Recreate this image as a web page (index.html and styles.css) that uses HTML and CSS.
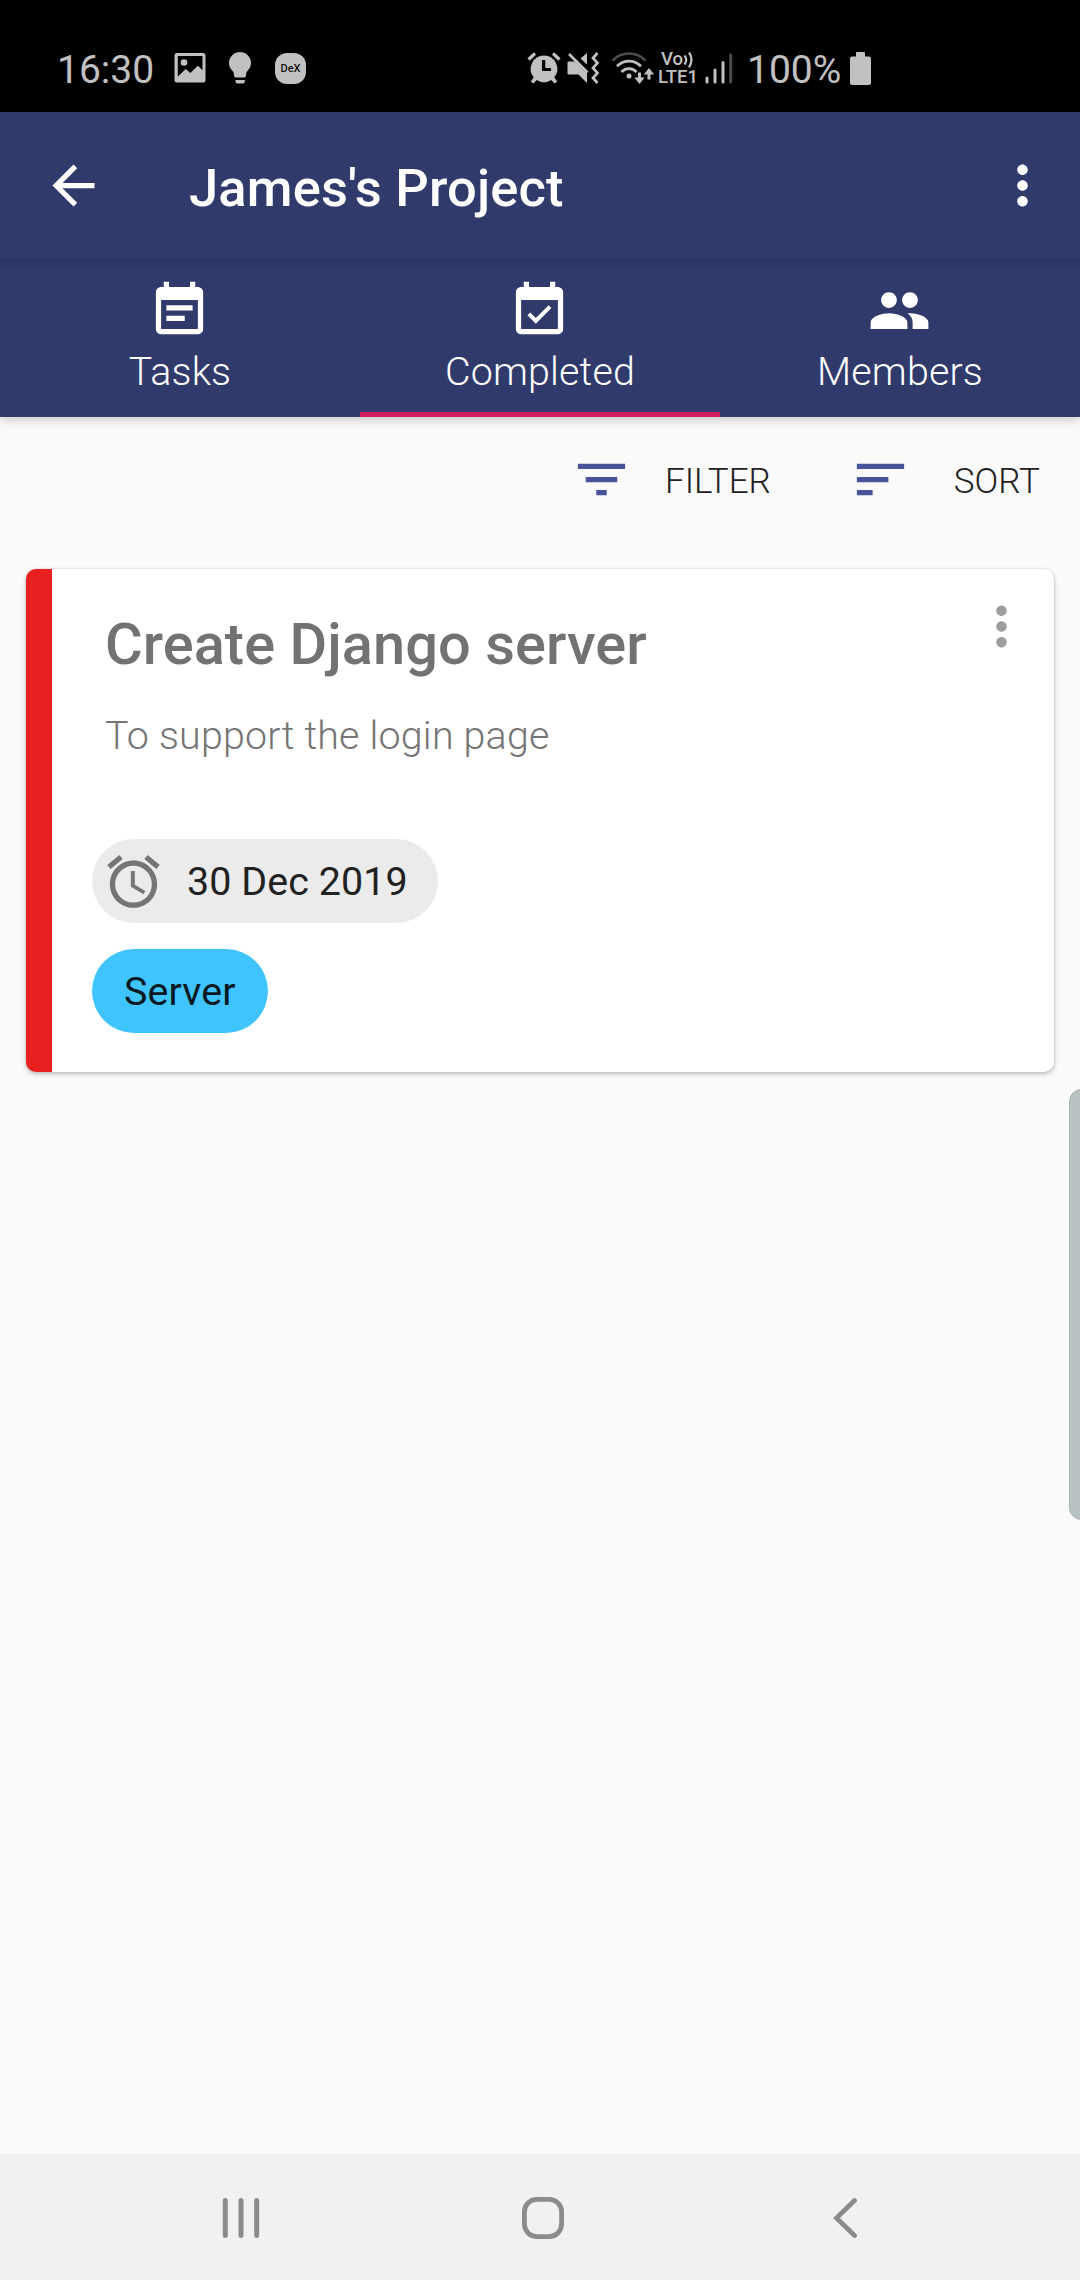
FILE: index.html
```html
<!DOCTYPE html>
<html lang="en">
<head>
<meta charset="utf-8">
<title>James's Project</title>
<link rel="stylesheet" href="styles.css">
</head>
<body>
<div class="screen">
  <div class="status-bar">
    <span class="status-text clock">16:30</span>
    <svg class="status-icon" width="32" height="32" viewBox="0 0 32 32"><path fill-rule="evenodd" d="M3 1h26a2.500 2.500 0 0 1 2.500 2.500v24.500a2.500 2.500 0 0 1-2.500 2.500H3A2.500 2.500 0 0 1 .500 28V3.500A2.500 2.500 0 0 1 3 1zm.800 3v20.500l8-7.500 4.500 4 7.700-7.200 4.500 4.400V4z"/><circle cx="10" cy="10.500" r="3.300"/></svg>
    <svg class="status-icon bulb" width="24" height="32" viewBox="0 0 24 32"><path d="M12 0a11 11 0 0 1 11 11c0 4.500-2.500 6.700-4.500 9l-.7 4.500q-.3.900-1.300.900h-9q-1 0-1.300-.9L5.500 20C3.500 17.700 1 15.500 1 11A11 11 0 0 1 12 0zM7.500 28h9.300v1.500q0 2-2 2H9.500q-2 0-2-2z"/></svg>
    <span class="dex">DeX</span>
    <div class="status-right">
      <svg class="status-icon" width="34" height="34" viewBox="0 0 34 34"><path fill-rule="evenodd" d="M17 4.500a13.300 13.300 0 0 1 10.200 21.800l3 4.200-2.700 2-3.100-3.500a13.300 13.300 0 0 1-14.800 0l-3.100 3.500-2.700-2 3-4.200A13.300 13.300 0 0 1 17 4.500zM15 9v11h9v-3h-5.700V9z"/><path d="M1.500 8.500l6.500-6M32.500 8.500l-6.500-6" fill="none" stroke="#c1c1c1" stroke-width="3.200"/></svg>
      <svg class="status-icon mute" width="33" height="34" viewBox="0 0 33 34"><path d="M1.500 10.500h6.500L20 22.500v9.500l-8.500-8.500h-10a1 1 0 0 1-1-1v-11a1 1 0 0 1 1-1zM13.500 7.500L20 2v11.500z"/><path d="M2 3l18.500 18.500M30.500 2l-4.500 5 4.500 5-4.500 5 4.500 5-4.500 5 4.500 5" fill="none" stroke="#c1c1c1" stroke-width="2.700"/></svg>
      <svg class="status-icon wifi" width="44" height="34" viewBox="0 0 44 34"><g fill="none" stroke="#c1c1c1" stroke-width="2.700"><path d="M1.500 9.500a23 23 0 0 1 33 0" stroke="#4c4c4c"/><path d="M6 15.300a16.500 16.500 0 0 1 24 0M10.500 21a10 10 0 0 1 15 0"/><path d="M28.500 21.500v7M38 28.500v-7" stroke-width="3"/></g><circle cx="18" cy="25" r="2.500"/><path d="M23.300 26.500h10.400l-5.200 6.500zM32.800 23.500h10.400L38 17z"/></svg>
      <span class="volte"><span class="vo">Vo<svg class="waves" width="11" height="18" viewBox="0 0 11 18"><path d="M1.500 4.500q3.500 4 0 9M6 1.500q5 6.500 0 15" fill="none" stroke="#c1c1c1" stroke-width="2.200"/></svg></span><span class="lte">LTE1</span></span>
      <svg class="status-icon signal" width="28" height="32" viewBox="0 0 28 32"><g fill="none" stroke="#c1c1c1" stroke-width="3" stroke-linecap="round"><path d="M2 26v4M10 18v12M18 10.500V30"/><path d="M25.700 3v27" stroke="#4c4c4c"/></g></svg>
      <span class="status-text percent">100%</span>
      <svg class="status-icon battery" width="21" height="33" viewBox="0 0 21 33"><path d="M7 0h7q1 0 1 1v3.500h4q2 0 2 2V31q0 2-2 2H2q-2 0-2-2V6.500q0-2 2-2h4V1q0-1 1-1z"/></svg>
    </div>
  </div>

  <header class="app-bar">
    <svg class="icon" viewBox="0 0 24 24"><path d="M20 11H7.830l5.590-5.590L12 4l-8 8 8 8 1.410-1.410L7.830 13H20v-2z"/></svg>
    <h1 class="app-title">James's Project</h1>
    <svg class="icon" viewBox="0 0 24 24"><path d="M12 8c1.100 0 2-.9 2-2s-.9-2-2-2-2 .9-2 2 .9 2 2 2zm0 2c-1.100 0-2 .9-2 2s.9 2 2 2 2-.9 2-2-.9-2-2-2zm0 6c-1.100 0-2 .9-2 2s.9 2 2 2 2-.9 2-2-.9-2-2-2z"/></svg>
  </header>

  <nav class="tabs">
    <div class="tab">
      <svg class="icon" viewBox="0 0 24 24"><path d="M17 10H7v2h10v-2zm2-7h-1V1h-2v2H8V1H6v2H5c-1.110 0-1.990.9-1.990 2L3 19c0 1.100.89 2 2 2h14c1.100 0 2-.9 2-2V5c0-1.100-.9-2-2-2zm0 16H5V8h14v11zm-5-5H7v2h7v-2z"/></svg>
      <span class="tab-label">Tasks</span>
    </div>
    <div class="tab active">
      <svg class="icon" viewBox="0 0 24 24"><path d="M16.530 11.060L15.470 10l-4.880 4.880-2.120-2.120-1.060 1.060L10.590 17l5.940-5.940zM19 3h-1V1h-2v2H8V1H6v2H5c-1.110 0-1.990.9-1.990 2L3 19c0 1.100.89 2 2 2h14c1.100 0 2-.9 2-2V5c0-1.100-.9-2-2-2zm0 16H5V8h14v11z"/></svg>
      <span class="tab-label">Completed</span>
    </div>
    <div class="tab">
      <svg class="icon" viewBox="0 0 24 24"><path d="M16 11c1.660 0 2.990-1.340 2.990-3S17.660 5 16 5s-3 1.340-3 3 1.340 3 3 3zm-8 0c1.660 0 2.990-1.340 2.990-3S9.660 5 8 5 5 6.340 5 8s1.340 3 3 3zm0 2c-2.330 0-7 1.170-7 3.500V19h14v-2.500c0-2.330-4.670-3.500-7-3.500zm8 0c-.29 0-.62.020-.97.050 1.160.84 1.970 1.970 1.970 3.450V19h6v-2.500c0-2.330-4.670-3.500-7-3.500z"/></svg>
      <span class="tab-label">Members</span>
    </div>
  </nav>

  <main class="content">
    <div class="tools">
      <div class="tool">
        <svg class="icon" viewBox="0 0 24 24"><path d="M10 18h4v-2h-4v2zM3 6v2h18V6H3zm3 7h12v-2H6v2z"/></svg>
        <span>FILTER</span>
      </div>
      <div class="tool sort">
        <svg class="icon" viewBox="0 0 24 24"><path d="M3 18h6v-2H3v2zM3 6v2h18V6H3zm0 7h12v-2H3v2z"/></svg>
        <span>SORT</span>
      </div>
    </div>

    <article class="card">
      <div class="card-body">
        <div class="card-head">
          <h2 class="card-title">Create Django server</h2>
          <svg class="icon card-menu" viewBox="0 0 24 24"><path d="M12 8c1.100 0 2-.9 2-2s-.9-2-2-2-2 .9-2 2 .9 2 2 2zm0 2c-1.100 0-2 .9-2 2s.9 2 2 2 2-.9 2-2-.9-2-2-2zm0 6c-1.100 0-2 .9-2 2s.9 2 2 2 2-.9 2-2-.9-2-2-2z"/></svg>
        </div>
        <p class="card-text">To support the login page</p>
        <div class="chips">
          <span class="chip date"><svg class="icon" viewBox="0 0 24 24"><path d="M22 5.720l-4.600-3.860-1.290 1.530 4.600 3.860L22 5.720zM7.880 3.390L6.600 1.860 2 5.710l1.290 1.530 4.590-3.850zM12.500 8H11v6l4.750 2.850.75-1.230-4-2.370V8zM12 4c-4.970 0-9 4.030-9 9s4.020 9 9 9c4.970 0 9-4.030 9-9s-4.030-9-9-9zm0 16c-3.870 0-7-3.130-7-7s3.130-7 7-7 7 3.130 7 7-3.130 7-7 7z"/></svg>30 Dec 2019</span>
          <span class="chip tag">Server</span>
        </div>
      </div>
    </article>
  </main>

  <footer class="nav-bar">
    <svg width="38" height="42" viewBox="0 0 38 42"><path d="M3.300 3.500v35M19 3.500v35M34.700 3.500v35" stroke-width="5"/></svg>
    <svg width="42" height="42" viewBox="0 0 42 42"><rect x="2.400" y="2.400" width="37.200" height="37.200" rx="12.500" stroke-width="4.800"/></svg>
    <svg width="24" height="42" viewBox="0 0 24 42"><path d="M21.500 3.500L3.500 21l18 17.500" stroke-width="4.800"/></svg>
  </footer>

  <div class="edge-handle"></div>
</div>
</body>
</html>
```
FILE: styles.css
```css
* {
  box-sizing: border-box;
}

body {
  margin: 0;
  font-family: Roboto, sans-serif;
}

h1, h2, p {
  margin: 0;
}

svg {
  display: block;
  flex: none;
}

.screen {
  position: relative;
  display: flex;
  flex-direction: column;
  width: 1080px;
  height: 2280px;
  overflow: hidden;
  background: #fafafa;
}

.icon {
  width: 63px;
  height: 63px;
  fill: currentColor;
}

/* Status bar */
.status-bar {
  display: flex;
  align-items: center;
  height: 112px;
  padding: 26px 209px 2px 57px;
  background: #000;
  color: #c1c1c1;
}

.status-icon {
  fill: #c1c1c1;
}

.status-text {
  padding-top: 3px;
  font-size: 39px;
  line-height: 46px;
}

.clock {
  width: 117px;
}

.bulb {
  margin-left: 22px;
}

.dex {
  width: 31px;
  height: 31px;
  margin-left: 23px;
  border-radius: 12px;
  background: #c1c1c1;
  color: #111;
  font-size: 11px;
  font-weight: 500;
  line-height: 32px;
  text-align: center;
}

.status-right {
  display: flex;
  align-items: center;
  margin-left: auto;
}

.mute {
  margin-left: 6px;
}

.wifi {
  margin-left: 11px;
}

.volte {
  display: flex;
  flex-direction: column;
  width: 39px;
  height: 34px;
  margin-left: 3px;
  font-size: 18.500px;
  font-weight: 500;
  line-height: 17px;
}

.vo {
  display: flex;
  padding-left: 3px;
}

.signal {
  margin-left: 8px;
}

.percent {
  width: 103px;
  margin-left: 14px;
}

/* App bar */
.app-bar {
  z-index: 1;
  display: flex;
  align-items: center;
  height: 147px;
  padding: 0 26px 0 42px;
  background: #303a6b;
  color: #fff;
  box-shadow: 0 2px 8px rgba(0, 0, 0, 0.16);
}

.app-title {
  flex: 1;
  padding: 4px 0 0 84px;
  font-size: 52.500px;
  font-weight: 500;
  letter-spacing: 0.150px;
  line-height: 62px;
}

/* Tabs */
.tabs {
  display: flex;
  height: 158px;
  background: #303a6b;
  color: #fff;
  box-shadow: 0 3px 10px rgba(0, 0, 0, 0.2);
}

.tab {
  display: flex;
  flex: 1;
  flex-direction: column;
  align-items: center;
  padding-top: 20px;
}

.tab .icon {
  margin-right: 1px;
}

.tab.active {
  border-bottom: 5px solid #d01e63;
}

.tab-label {
  margin-top: 6px;
  font-size: 39.400px;
  font-weight: 300;
  letter-spacing: 0.150px;
  line-height: 47px;
}

/* Content */
.content {
  flex: 1;
}

.tools {
  display: flex;
  justify-content: flex-end;
  gap: 78px;
  height: 152px;
  padding: 31px 40px 0 0;
}

.tool {
  display: flex;
  gap: 32px;
  height: 63px;
  color: #212121;
  font-size: 35px;
  font-weight: 300;
  line-height: 67px;
}

.tool.sort {
  gap: 42px;
}

.tool .icon {
  color: #485399;
}

.card {
  height: 503px;
  margin: 0 26px;
  overflow: hidden;
  border-left: 26px solid #e92020;
  border-radius: 10px;
  background: #fff;
  box-shadow: 0 2px 5px rgba(0, 0, 0, 0.26), 0 0 2px rgba(0, 0, 0, 0.12);
}

.card-body {
  padding: 26px 21px 0 40px;
}

.card-head {
  display: flex;
  justify-content: space-between;
}

.card-title {
  padding: 15px 0 0 13px;
  color: #727272;
  font-size: 57.750px;
  font-weight: 500;
  letter-spacing: 0.050px;
  line-height: 68px;
}

.card-menu {
  color: #9e9e9e;
}

.card-text {
  padding: 34px 0 0 13px;
  color: #757575;
  font-size: 39.400px;
  font-weight: 300;
  letter-spacing: 0.200px;
  line-height: 48px;
}

.chips {
  display: flex;
  flex-direction: column;
  align-items: flex-start;
  gap: 26px;
  margin-top: 79px;
}

.chip {
  display: flex;
  align-items: center;
  height: 84px;
  padding: 0 32px;
  border-radius: 42px;
  color: #212121;
  font-size: 39.400px;
  letter-spacing: 0.100px;
}

.date {
  gap: 22px;
  padding: 0 30px 0 10px;
  background: #ebebeb;
}

.date .icon {
  color: #757575;
}

.tag {
  background: #40c4ff;
  color: #081921;
}

/* System navigation */
.nav-bar {
  display: flex;
  align-items: center;
  justify-content: space-between;
  height: 126px;
  padding: 2px 223px 0 222px;
  background: #f1f1f1;
}

.nav-bar svg {
  fill: none;
  stroke: #8b8b8b;
  stroke-linecap: round;
}

.nav-bar svg:nth-child(2) {
  margin-right: 7px;
}

/* Edge panel handle laid over the page */
.edge-handle {
  position: absolute;
  top: 1089px;
  right: -14px;
  width: 25px;
  height: 431px;
  border: 1px solid #acb2b2;
  border-radius: 14px;
  background: #b8c2c2;
}
```
